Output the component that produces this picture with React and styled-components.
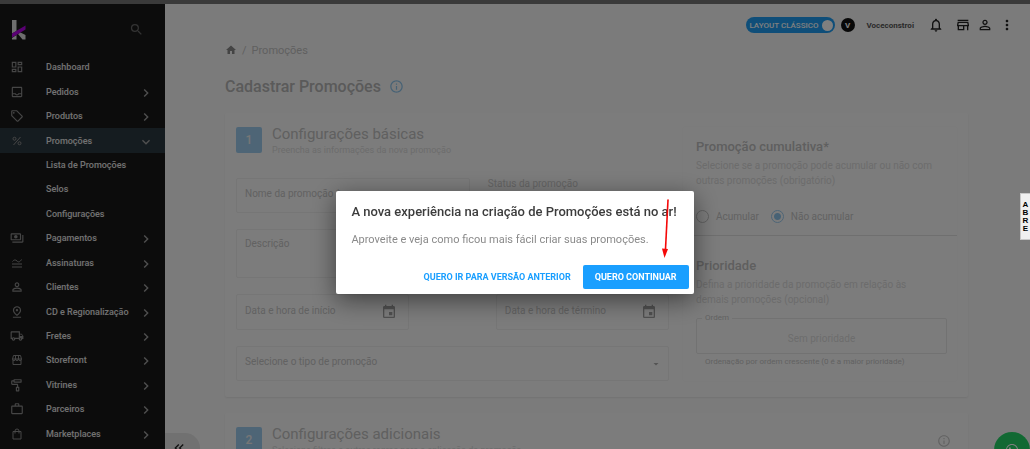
import React from "react";
import styled, { createGlobalStyle } from "styled-components";
import {
    MdOutlineDashboard, MdOutlineInbox, MdOutlineLocalOffer, MdOutlinePayments, MdPersonOutline,
    MdOutlinePinDrop, MdOutlineLocalShipping, MdOutlineImagesearchRoller, MdWorkOutline,
    MdSearch, MdOutlineNotifications, MdOutlineStore, MdMoreVert, MdHome,
    MdInfoOutline, MdChevronRight, MdExpandMore, MdKeyboardDoubleArrowLeft, MdEvent, MdArrowDropDown,
} from "react-icons/md";
import { FaWhatsapp } from "react-icons/fa";

function LogoIcon() {
    return (
        <svg width="14" height="20" viewBox="0 0 14 20" aria-hidden="true">
            <path d="M0 0h4.500v11L0 13.500zM0 18l4.500-3v4.500H0zM6 14l2.500-1.500 5 2.500v4.500h-3z" fill="#dcdcdc" />
            <path d="M0 13.500 13.500 5.500v4L0 17.500z" fill="#b400e6" />
        </svg>
    );
}

function NavGlyph({ d }) {
    return (
        <svg width="12" height="12" viewBox="0 0 24 24" fill="none" stroke="currentColor" strokeWidth="2" aria-hidden="true">
            <path d={d} />
        </svg>
    );
}

const glyphs = {
    percent: "M19 4 5 20M10 7.500a3 3 0 1 1-6 0 3 3 0 0 1 6 0zM20 16.500a3 3 0 1 1-6 0 3 3 0 0 1 6 0z",
    subscription: "M3 9c3-4 6-4 9-1s6 2 9-3M2 14h20M2 20h20",
    storefront: "M5 3h14l2 7H3zM3 10a3 3 0 0 0 6 0 3 3 0 0 0 6 0 3 3 0 0 0 6 0M9 3v7M15 3v7M4 12v9h16v-9",
    bag: "M4 7h16v15H4zM8 11V6a4 4 0 0 1 8 0v5",
};

const menu = [
    { label: "Dashboard", icon: <MdOutlineDashboard /> },
    { label: "Pedidos", icon: <MdOutlineInbox />, more: true },
    { label: "Produtos", icon: <MdOutlineLocalOffer />, more: true },
    { label: "Promoções", icon: <NavGlyph d={glyphs.percent} />, open: true },
    { label: "Lista de Promoções" },
    { label: "Selos" },
    { label: "Configurações" },
    { label: "Pagamentos", icon: <MdOutlinePayments />, more: true },
    { label: "Assinaturas", icon: <NavGlyph d={glyphs.subscription} />, more: true },
    { label: "Clientes", icon: <MdPersonOutline />, more: true },
    { label: "CD e Regionalização", icon: <MdOutlinePinDrop />, more: true },
    { label: "Fretes", icon: <MdOutlineLocalShipping />, more: true },
    { label: "Storefront", icon: <NavGlyph d={glyphs.storefront} />, more: true },
    { label: "Vitrines", icon: <MdOutlineImagesearchRoller />, more: true },
    { label: "Parceiros", icon: <MdWorkOutline />, more: true },
    { label: "Marketplaces", icon: <NavGlyph d={glyphs.bag} />, more: true },
];

function Sidebar() {
    return (
        <SidebarStyled>
            <SidebarHead>
                <LogoIcon />
                <SearchButton aria-label="Buscar"><MdSearch /></SearchButton>
            </SidebarHead>
            <Nav>
                {menu.map((item) => (
                    <NavItem key={item.label} href="#" $active={item.open}>
                        <NavIcon>{item.icon}</NavIcon>
                        <span>{item.label}</span>
                        <NavArrow>
                            {item.more && <MdChevronRight />}
                            {item.open && <MdExpandMore />}
                        </NavArrow>
                    </NavItem>
                ))}
            </Nav>
        </SidebarStyled>
    );
}

function Header() {
    return (
        <HeaderStyled>
            <LayoutToggle>
                LAYOUT CLÁSSICO
                <input type="checkbox" defaultChecked />
            </LayoutToggle>
            <Avatar>V</Avatar>
            <UserName>Voceconstroi</UserName>
            <IconButton aria-label="Notificações"><MdOutlineNotifications /></IconButton>
            <HeaderActions>
                <IconButton aria-label="Loja"><MdOutlineStore /></IconButton>
                <IconButton aria-label="Conta"><MdPersonOutline /></IconButton>
                <IconButton aria-label="Mais"><MdMoreVert /></IconButton>
            </HeaderActions>
        </HeaderStyled>
    );
}

function BasicFields() {
    return (
        <FieldColumn>
            <SectionHead>
                <StepNumber>1</StepNumber>
                <div>
                    <SectionTitle>Configurações básicas</SectionTitle>
                    <SectionHint>Preencha as informações da nova promoção</SectionHint>
                </div>
            </SectionHead>
            <NameRow>
                <Input aria-label="Nome da promoção" placeholder="Nome da promoção *" />
                <StatusLabel>Status da promoção</StatusLabel>
            </NameRow>
            <TextArea aria-label="Descrição" placeholder="Descrição" />
            <DateRow>
                <DateField>
                    <input aria-label="Data e hora de início" placeholder="Data e hora de início" />
                    <MdEvent />
                </DateField>
                <DateField>
                    <input aria-label="Data e hora de término" placeholder="Data e hora de término" />
                    <MdEvent />
                </DateField>
            </DateRow>
            <SelectField>
                <select aria-label="Tipo de promoção">
                    <option>Selecione o tipo de promoção</option>
                </select>
                <MdArrowDropDown />
            </SelectField>
        </FieldColumn>
    );
}

function RulesPanel() {
    return (
        <Panel>
            <PanelBlock>
                <PanelTitle>Promoção cumulativa*</PanelTitle>
                <PanelText>Selecione se a promoção pode acumular ou não com outras promoções (obrigatório)</PanelText>
                <RadioRow>
                    <Radio><input type="radio" name="cumulative" />Acumular</Radio>
                    <Radio><input type="radio" name="cumulative" defaultChecked />Não acumular</Radio>
                </RadioRow>
            </PanelBlock>
            <PanelBlock>
                <PanelTitle>Prioridade</PanelTitle>
                <PanelText>Defina a prioridade da promoção em relação às demais promoções (opcional)</PanelText>
                <OrderField>
                    <legend><label htmlFor="order">Ordem</label></legend>
                    <input id="order" placeholder="Sem prioridade" />
                </OrderField>
                <HelperText>Ordenação por ordem crescente (0 é a maior prioridade)</HelperText>
            </PanelBlock>
        </Panel>
    );
}

function Dialog() {
    return (
        <Backdrop>
            <DialogStyled role="dialog" aria-labelledby="dialog-title">
                <h2 id="dialog-title">A nova experiência na criação de Promoções está no ar!</h2>
                <p>Aproveite e veja como ficou mais fácil criar suas promoções.</p>
                <DialogActions>
                    <DialogButton>QUERO IR PARA VERSÃO ANTERIOR</DialogButton>
                    <DialogButton $primary>QUERO CONTINUAR</DialogButton>
                </DialogActions>
                <Arrow width="8" height="60" viewBox="0 0 8 60" aria-hidden="true">
                    <path d="M6 1 3.500 50" stroke="#f50808" strokeWidth="1.600" strokeLinecap="round" />
                    <path d="M0 49.500 6 50 2.500 59z" fill="#f50808" />
                </Arrow>
            </DialogStyled>
        </Backdrop>
    );
}

export default function App() {
    return (
        <>
            <GlobalStyle />
            <Page>
                <TopStrip />
                <Body>
                    <Sidebar />
                    <Main>
                        <Header />
                        <Content>
                            <Breadcrumb>
                                <MdHome />
                                <span>/</span>
                                <a href="#">Promoções</a>
                            </Breadcrumb>
                            <PageTitle>Cadastrar Promoções <MdInfoOutline /></PageTitle>
                            <Card>
                                <BasicFields />
                                <RulesPanel />
                            </Card>
                            <Card>
                                <SectionHead>
                                    <StepNumber>2</StepNumber>
                                    <div>
                                        <SectionTitle>Configurações adicionais</SectionTitle>
                                        <SectionHint>Selecione filtros e outras regras para a aplicação da promoção</SectionHint>
                                    </div>
                                    <InfoMark><MdInfoOutline /></InfoMark>
                                </SectionHead>
                            </Card>
                        </Content>
                    </Main>
                </Body>
            </Page>
            <CollapseButton aria-label="Recolher menu"><MdKeyboardDoubleArrowLeft /></CollapseButton>
            <WhatsButton aria-label="WhatsApp"><FaWhatsapp /></WhatsButton>
            <Dialog />
            <SideTab>
                <span>A</span>
                <span>B</span>
                <span>R</span>
                <span>E</span>
            </SideTab>
        </>
    );
}

const GlobalStyle = createGlobalStyle`
    * {
        box-sizing: border-box;
    }

    body {
        margin: 0;
        font-family: Roboto, "Liberation Sans", sans-serif;
        font-size: 10px;
        color: #c4c4c4;
        background: #f7f7f7;
    }

    button, input, textarea, select {
        font: inherit;
        color: inherit;
    }

    button {
        padding: 0;
        border: 0;
        background: none;
        cursor: pointer;
    }

    h1, h2, h3, p {
        margin: 0;
    }

    a {
        color: inherit;
        text-decoration: none;
    }

    ::placeholder {
        color: inherit;
        opacity: 1;
    }
`;

const Page = styled.div`
    display: flex;
    flex-direction: column;
    height: 100vh;
    overflow: hidden;
`;

const TopStrip = styled.div`
    flex: none;
    height: 4px;
    background: #747474;
`;

const Body = styled.div`
    display: flex;
    flex: 1;
    min-height: 0;
`;

const SidebarStyled = styled.aside`
    display: flex;
    flex-direction: column;
    flex: none;
    width: 165px;
    padding-bottom: 3px;
    background: #191919;
    color: #e4e4e4;
`;

const SidebarHead = styled.div`
    display: flex;
    align-items: center;
    justify-content: space-between;
    height: 51px;
    padding: 0 21px 0 12px;
`;

const SearchButton = styled.button`
    display: flex;
    font-size: 15px;
    color: #666666;
`;

const Nav = styled.nav`
    display: flex;
    flex-direction: column;
    flex: 1;
`;

const NavItem = styled.a`
    display: grid;
    grid-template-columns: 36px 1fr 16px;
    align-items: center;
    flex: 1 0 24px;
    padding: 0 11px 0 10px;
    font-size: 9px;
    font-weight: 500;
    background: ${(props) => (props.$active ? "#2b3840" : "transparent")};
`;

const NavIcon = styled.span`
    display: flex;
    justify-content: center;
    width: 14px;
    font-size: 14px;
    color: #8c8c8c;
`;

const NavArrow = styled.span`
    display: flex;
    padding-top: 2px;
    font-size: 16px;
    color: #a0a0a0;
`;

const Main = styled.main`
    flex: 1;
    min-width: 0;
`;

const HeaderStyled = styled.header`
    display: flex;
    align-items: center;
    justify-content: flex-end;
    height: 40px;
    padding: 2px 15px 0 0;
    color: #222222;
`;

const LayoutToggle = styled.label`
    display: flex;
    align-items: center;
    gap: 3px;
    height: 16px;
    padding: 0 2px 0 3px;
    border-radius: 8px;
    background: #1e9df2;
    color: #ffffff;
    font-size: 8px;
    font-weight: 500;

    input {
        appearance: none;
        width: 11px;
        height: 11px;
        margin: 0;
        border-radius: 50%;
        background: #ffffff;
    }
`;

const Avatar = styled.span`
    display: grid;
    place-items: center;
    width: 14px;
    height: 14px;
    margin: 0 12px 0 6px;
    border-radius: 50%;
    background: #111111;
    color: #ffffff;
    font-size: 8px;
    font-weight: 700;
`;

const UserName = styled.span`
    margin-right: 14px;
    font-size: 8px;
    font-weight: 700;
    color: #555555;
`;

const HeaderActions = styled.div`
    display: flex;
    gap: 6px;
    margin-left: 11px;
`;

const IconButton = styled.button`
    display: flex;
    font-size: 16px;
`;

const Content = styled.div`
    padding: 0 62px 0 60px;
`;

const Breadcrumb = styled.nav`
    display: flex;
    align-items: center;
    gap: 5px;
    height: 12px;
    font-size: 11px;
    color: #c0c0c0;

    svg {
        font-size: 12px;
        color: #888888;
    }
`;

const PageTitle = styled.h1`
    display: flex;
    align-items: center;
    gap: 8px;
    height: 18px;
    margin: 21px 0 18px;
    font-size: 16px;
    font-weight: 500;
    color: #b4b4b4;

    svg {
        font-size: 15px;
        color: #8fc4ea;
    }
`;

const Card = styled.section`
    display: flex;
    gap: 14px;
    margin-bottom: 16px;
    padding: 14px 11px 16px;
    border-radius: 2px;
    background: #f9f9f9;
    box-shadow: 0 1px 2px rgba(0, 0, 0, 0.08);
`;

const FieldColumn = styled.div`
    display: flex;
    flex-direction: column;
    gap: 16px;
    flex: 1;
    min-width: 0;
`;

const SectionHead = styled.div`
    display: flex;
    gap: 10px;
    width: 100%;
    height: 35px;
`;

const StepNumber = styled.span`
    display: grid;
    place-items: center;
    flex: none;
    width: 26px;
    height: 26px;
    border-radius: 2px;
    background: #9ccbed;
    color: #ececec;
    font-size: 12px;
    font-weight: 500;
`;

const SectionTitle = styled.h2`
    font-size: 15px;
    font-weight: 400;
    line-height: 14px;
    color: #c0c0c0;
`;

const SectionHint = styled.p`
    font-size: 9px;
    line-height: 18px;
    color: #d8d8d8;
`;

const InfoMark = styled.span`
    margin-left: auto;
    padding: 7px 6px;
    font-size: 14px;
    line-height: 14px;
`;

const NameRow = styled.div`
    display: grid;
    grid-template-columns: 54% 1fr;
    gap: 18px;
`;

const Input = styled.input`
    width: 100%;
    height: 35px;
    padding: 0 8px 4px;
    border: 1px solid #ececec;
    border-radius: 2px;
    background: transparent;
`;

const StatusLabel = styled.span`
    color: #c8c8c8;
`;

const TextArea = styled.textarea`
    display: block;
    height: 49px;
    padding: 8px;
    border: 1px solid #ececec;
    border-radius: 2px;
    background: transparent;
    resize: none;
`;

const DateRow = styled.div`
    display: flex;
    justify-content: space-between;
`;

const DateField = styled.div`
    display: flex;
    align-items: center;
    width: 40%;
    height: 36px;
    padding: 0 11px 0 8px;
    border: 1px solid #ececec;
    border-radius: 2px;

    input {
        flex: 1;
        min-width: 0;
        padding: 0 0 4px;
        border: 0;
        background: none;
    }

    svg {
        font-size: 16px;
        color: #a0a0a0;
    }
`;

const SelectField = styled.div`
    display: flex;
    align-items: center;
    height: 35px;
    padding: 0 6px 0 8px;
    border: 1px solid #ececec;
    border-radius: 2px;

    select {
        flex: 1;
        appearance: none;
        padding: 0 0 4px;
        border: 0;
        background: none;
    }

    svg {
        font-size: 12px;
        color: #a8a8a8;
    }
`;

const Panel = styled.div`
    flex: none;
    width: 38%;
    border-radius: 2px;
    box-shadow: 0 0 2px rgba(0, 0, 0, 0.06);
`;

const PanelBlock = styled.div`
    padding: 12px 10px 12px 13px;

    & + & {
        padding-top: 22px;
        border-top: 1px solid #dedede;
    }
`;

const PanelTitle = styled.h3`
    margin-bottom: 3px;
    font-size: 13px;
    font-weight: 500;
    line-height: 16px;
    color: #bebebe;
`;

const PanelText = styled.p`
    padding-right: 10px;
    line-height: 15px;
    color: #d8d8d8;
`;

const RadioRow = styled.div`
    display: flex;
    gap: 12px;
    margin-top: 22px;
`;

const Radio = styled.label`
    display: flex;
    align-items: center;
    gap: 7px;

    input {
        appearance: none;
        width: 13px;
        height: 13px;
        margin: 0;
        border: 1px solid #c0c0c0;
        border-radius: 50%;
    }

    input:checked {
        border-color: #9ccbed;
        background: radial-gradient(circle, #8fc4ea 3px, transparent 4px);
    }
`;

const OrderField = styled.fieldset`
    margin: 6px 0 0;
    padding: 0;
    border: 1px solid #e4e4e4;
    border-radius: 2px;

    legend {
        margin-left: 5px;
        padding: 0 3px;
        font-size: 8px;
        line-height: 10px;
    }

    input {
        display: block;
        width: 100%;
        height: 30px;
        padding: 0;
        border: 0;
        background: none;
        text-align: center;
        color: #dadada;
    }
`;

const HelperText = styled.p`
    padding: 3px 9px 0;
    font-size: 8px;
    line-height: 10px;
`;

const Backdrop = styled.div`
    position: fixed;
    inset: 0;
    display: grid;
    place-items: center;
    padding-top: 36px;
    background: rgba(0, 0, 0, 0.5);
`;

const DialogStyled = styled.div`
    position: relative;
    padding: 12px 5px 5px 15px;
    border-radius: 2px;
    background: #ffffff;
    box-shadow: 0 6px 24px rgba(0, 0, 0, 0.5);

    h2 {
        padding-right: 12px;
        font-size: 13px;
        font-weight: 500;
        line-height: 18px;
        color: #3c3c3c;
    }

    p {
        padding-top: 11px;
        font-size: 11px;
        line-height: 16px;
        color: #8a8a8a;
    }
`;

const DialogActions = styled.div`
    display: flex;
    justify-content: flex-end;
    margin-top: 17px;
`;

const DialogButton = styled.button`
    height: 24px;
    padding: 0 12px;
    border-radius: 2px;
    background: ${(props) => (props.$primary ? "#1a9fff" : "transparent")};
    color: ${(props) => (props.$primary ? "#ffffff" : "#1a9fff")};
    font-size: 9px;
    font-weight: 700;
`;

/* hand-drawn pointer lying over the dialog */
const Arrow = styled.svg`
    position: absolute;
    right: 24px;
    top: 8px;
`;

const CollapseButton = styled.button`
    position: fixed;
    left: 165px;
    bottom: -14px;
    display: flex;
    align-items: center;
    width: 35px;
    height: 30px;
    padding-left: 6px;
    border-radius: 0 15px 15px 0;
    background: #e2e2e2;
    color: #222222;
    font-size: 16px;
`;

const WhatsButton = styled.button`
    position: fixed;
    right: 0;
    bottom: -19px;
    display: grid;
    place-items: center;
    width: 36px;
    height: 36px;
    border-radius: 50%;
    background: #25d366;
    color: #ffffff;
    font-size: 14px;
`;

const SideTab = styled.button`
    position: fixed;
    right: 0;
    top: 193px;
    display: flex;
    flex-direction: column;
    align-items: center;
    justify-content: center;
    width: 10px;
    height: 47px;
    border: 1px solid #c8c8c8;
    border-right: 0;
    background: #f0f0f0;
    color: #000000;
    font-family: "Liberation Sans", sans-serif;
    font-size: 8px;
    font-weight: 700;
    line-height: 8px;
`;
